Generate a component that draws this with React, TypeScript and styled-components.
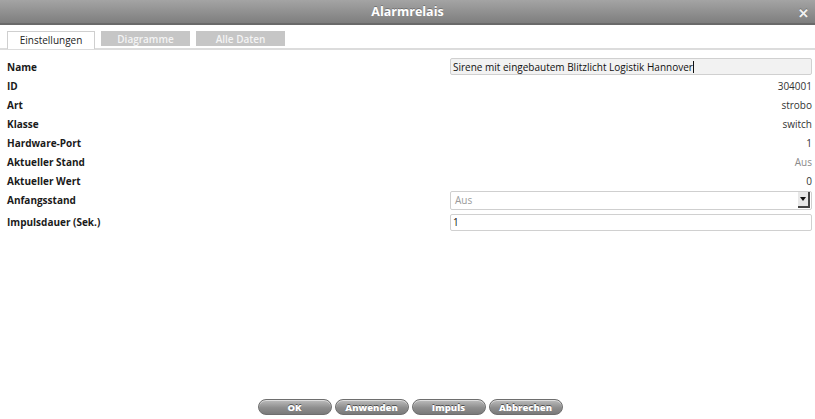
import React from "react";
import styled, { createGlobalStyle } from "styled-components";

const Global = createGlobalStyle`
  html, body { margin: 0; padding: 0; background: #fff; }
  body { font-family: "Open Sans", "Liberation Sans", sans-serif; }
  #root { width: 815px; height: 419px; }
`;

const Dialog = styled.div`
  width: 815px;
  height: 419px;
  display: flex;
  flex-direction: column;
  background: #fff;
  overflow: hidden;
`;

const TitleBar = styled.div`
  height: 23px;
  flex: none;
  position: relative;
  display: flex;
  align-items: center;
  justify-content: center;
  background: linear-gradient(#a4a4a4, #7e7e7e);
  border-bottom: 2px solid #6a6a6a;
  color: #fff;
  font-weight: 700;
  font-size: 12.5px;
  text-shadow: 0 -1px 0 rgba(0, 0, 0, 0.25);
`;

const Close = styled.span`
  position: absolute;
  right: 6px;
  top: 4px;
  font-size: 13px;
  font-weight: 700;
  color: #f2f2f2;
`;

const Tabs = styled.div`
  display: flex;
  gap: 6px;
  padding: 6px 0 0 7px;
  border-bottom: 2px solid #dcdcdc;
  flex: none;
`;

const Tab = styled.div<{ $active?: boolean }>`
  width: ${(p) => (p.$active ? 86 : 87)}px;
  height: ${(p) => (p.$active ? 15 : 13)}px;
  margin-bottom: ${(p) => (p.$active ? -2 : 2)}px;
  display: flex;
  align-items: center;
  justify-content: center;
  font-size: 10px;
  font-weight: ${(p) => (p.$active ? 500 : 600)};
  color: ${(p) => (p.$active ? "#222" : "#f4f4f4")};
  background: ${(p) => (p.$active ? "#fff" : "#c6c6c6")};
  border: 1px solid ${(p) => (p.$active ? "#cfcfcf" : "#c6c6c6")};
  border-bottom: ${(p) => (p.$active ? "none" : "1px solid #c6c6c6")};
  padding-bottom: ${(p) => (p.$active ? 2 : 0)}px;
`;

const Form = styled.div`
  display: flex;
  flex-direction: column;
  padding: 7px 3px 0 7px;
  flex: 1;
`;

const Row = styled.div<{ $h?: number }>`
  display: flex;
  align-items: center;
  justify-content: space-between;
  height: ${(p) => p.$h ?? 19}px;
`;

const Label = styled.div`
  font-size: 10px;
  font-weight: 700;
  color: #1a1a1a;
`;

const Value = styled.div<{ $muted?: boolean }>`
  font-size: 10px;
  color: ${(p) => (p.$muted ? "#8a8a8a" : "#333")};
`;

const Input = styled.div<{ $bg?: string }>`
  width: 362px;
  height: 17px;
  box-sizing: border-box;
  border: 1px solid #d0d0d0;
  border-radius: 2px;
  background: ${(p) => p.$bg ?? "#fff"};
  font-size: 10px;
  color: #111;
  display: flex;
  align-items: center;
  padding-left: 2px;
  white-space: nowrap;
`;

const Caret = styled.span`
  display: inline-block;
  width: 1px;
  height: 12px;
  background: #111;
`;

const Select = styled.div`
  width: 362px;
  height: 19px;
  box-sizing: border-box;
  border: 1px solid #cfcfcf;
  border-radius: 2px;
  background: #fff;
  display: flex;
  align-items: center;
  justify-content: space-between;
  font-size: 10px;
  color: #9a9a9a;
  padding-left: 4px;
`;

const Arrow = styled.div`
  width: 10px;
  height: 14px;
  margin-right: 1px;
  background: #e8e8e8;
  border-right: 2px solid #444;
  border-bottom: 2px solid #444;
  display: flex;
  align-items: center;
  justify-content: center;
  &::after {
    content: "";
    border-left: 3px solid transparent;
    border-right: 3px solid transparent;
    border-top: 4px solid #111;
  }
`;

const Footer = styled.div`
  display: flex;
  justify-content: center;
  gap: 3px;
  padding: 0 0 4px 5px;
  flex: none;
`;

const Button = styled.button`
  width: 74px;
  height: 16px;
  border-radius: 8px;
  border: 1px solid #6e6e6e;
  background: linear-gradient(#bdbdbd, #8e8e8e 55%, #7a7a7a);
  box-shadow: inset 0 1px 0 rgba(255, 255, 255, 0.5);
  color: #fff;
  font-family: "Open Sans", "Liberation Sans", sans-serif;
  font-weight: 800;
  font-size: 9.5px;
  text-shadow: 0 -1px 0 rgba(0, 0, 0, 0.5);
  padding: 0;
`;

export default function App() {
  return (
    <Dialog>
      <Global />
      <TitleBar>
        Alarmrelais
        <Close>✕</Close>
      </TitleBar>
      <Tabs>
        <Tab $active>Einstellungen</Tab>
        <Tab>Diagramme</Tab>
        <Tab>Alle Daten</Tab>
      </Tabs>
      <Form>
        <Row>
          <Label>Name</Label>
          <Input $bg="#f2f2f2">
            Sirene mit eingebautem Blitzlicht Logistik Hannover
            <Caret />
          </Input>
        </Row>
        <Row>
          <Label>ID</Label>
          <Value>304001</Value>
        </Row>
        <Row>
          <Label>Art</Label>
          <Value>strobo</Value>
        </Row>
        <Row>
          <Label>Klasse</Label>
          <Value>switch</Value>
        </Row>
        <Row>
          <Label>Hardware-Port</Label>
          <Value>1</Value>
        </Row>
        <Row>
          <Label>Aktueller Stand</Label>
          <Value $muted>Aus</Value>
        </Row>
        <Row>
          <Label>Aktueller Wert</Label>
          <Value>0</Value>
        </Row>
        <Row $h={20}>
          <Label>Anfangsstand</Label>
          <Select>
            Aus
            <Arrow />
          </Select>
        </Row>
        <Row $h={24}>
          <Label>Impulsdauer (Sek.)</Label>
          <Input>1</Input>
        </Row>
      </Form>
      <Footer>
        <Button>OK</Button>
        <Button>Anwenden</Button>
        <Button>Impuls</Button>
        <Button>Abbrechen</Button>
      </Footer>
    </Dialog>
  );
}
